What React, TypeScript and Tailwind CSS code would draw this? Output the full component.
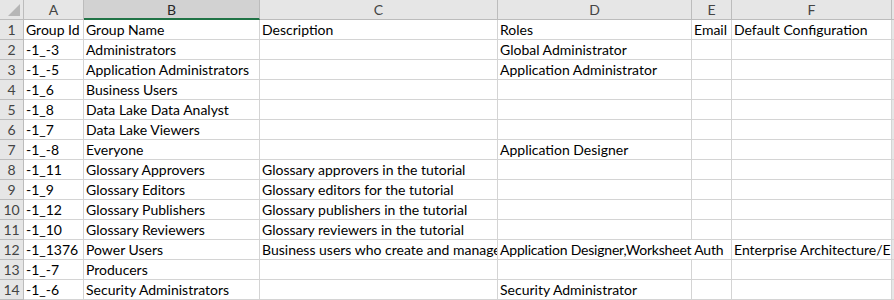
const cols = ["A", "B", "C", "D", "E", "F"];

// null = empty cell that the text on its left spills into
const rows: (string | null)[][] = [
  ["Group Id", "Group Name", "Description", "Roles", "Email", "Default Configuration"],
  ["-1_-3", "Administrators", "", "Global Administrator", "", ""],
  ["-1_-5", "Application Administrators", "", "Application Administrator", "", ""],
  ["-1_6", "Business Users", "", "", "", ""],
  ["-1_8", "Data Lake Data Analyst", "", "", "", ""],
  ["-1_7", "Data Lake Viewers", "", "", "", ""],
  ["-1_-8", "Everyone", "", "Application Designer", "", ""],
  ["-1_11", "Glossary Approvers", "Glossary approvers in the tutorial", "", "", ""],
  ["-1_9", "Glossary Editors", "Glossary editors for the tutorial", "", "", ""],
  ["-1_12", "Glossary Publishers", "Glossary publishers in the tutorial", "", "", ""],
  ["-1_10", "Glossary Reviewers", "Glossary reviewers in the tutorial", "", "", ""],
  [
    "-1_1376",
    "Power Users",
    "Business users who create and manage",
    "Application Designer,Worksheet Auth",
    null,
    "Enterprise Architecture/E",
  ],
  ["-1_-7", "Producers", "", "", "", ""],
  ["-1_-6", "Security Administrators", "", "Security Administrator", "", ""],
];

export default function App() {
  return (
    <div className="h-[300px] w-[894px] overflow-hidden bg-white font-['Lato','Liberation_Sans',sans-serif] text-[14px] leading-[18px] text-black">
      <div className="grid grid-cols-[24px_60px_176px_238px_194px_40px_160px_1fr] auto-rows-[20px]">
        {/* Corner */}
        <div className="relative border-b border-r border-[#bcbcbc] bg-[#e6e6e6]">
          <svg className="absolute bottom-[3px] right-[3px]" width="12" height="12" viewBox="0 0 12 12">
            <polygon points="12,0 12,12 0,12" fill="#b6b6b6" />
          </svg>
        </div>
        {cols.map((c) => (
          <div
            key={c}
            className={
              c === "B"
                ? "flex items-center justify-center border-b-2 border-r border-b-[#217346] border-r-[#bcbcbc] bg-[#d2d2d2] pt-[1px] text-[#262626]"
                : "flex items-center justify-center border-b border-r border-[#bcbcbc] bg-[#e6e6e6] text-[#444]"
            }
          >
            {c}
          </div>
        ))}
        <div className="border-b border-[#bcbcbc] bg-[#e6e6e6]" />

        {rows.map((r, i) => (
          <Row key={i} n={i + 1} cells={r} />
        ))}
      </div>
    </div>
  );
}

function Row({ n, cells }: { n: number; cells: (string | null)[] }) {
  return (
    <>
      <div className="flex items-end justify-center border-b border-r border-[#bcbcbc] bg-[#e6e6e6] text-[#444]">
        {n}
      </div>
      {cells.map((t, j) =>
        t === null ? null : (
          <div
            key={j}
            className={
              (cells[j + 1] === null ? "col-span-2 tracking-[-0.2px] " : "") +
              "flex items-end overflow-hidden whitespace-nowrap border-b border-r border-[#d4d4d4] pl-[2px]"
            }
          >
            {t}
          </div>
        )
      )}
      <div className="border-b border-[#d4d4d4] bg-[#e6e6e6]" />
    </>
  );
}
